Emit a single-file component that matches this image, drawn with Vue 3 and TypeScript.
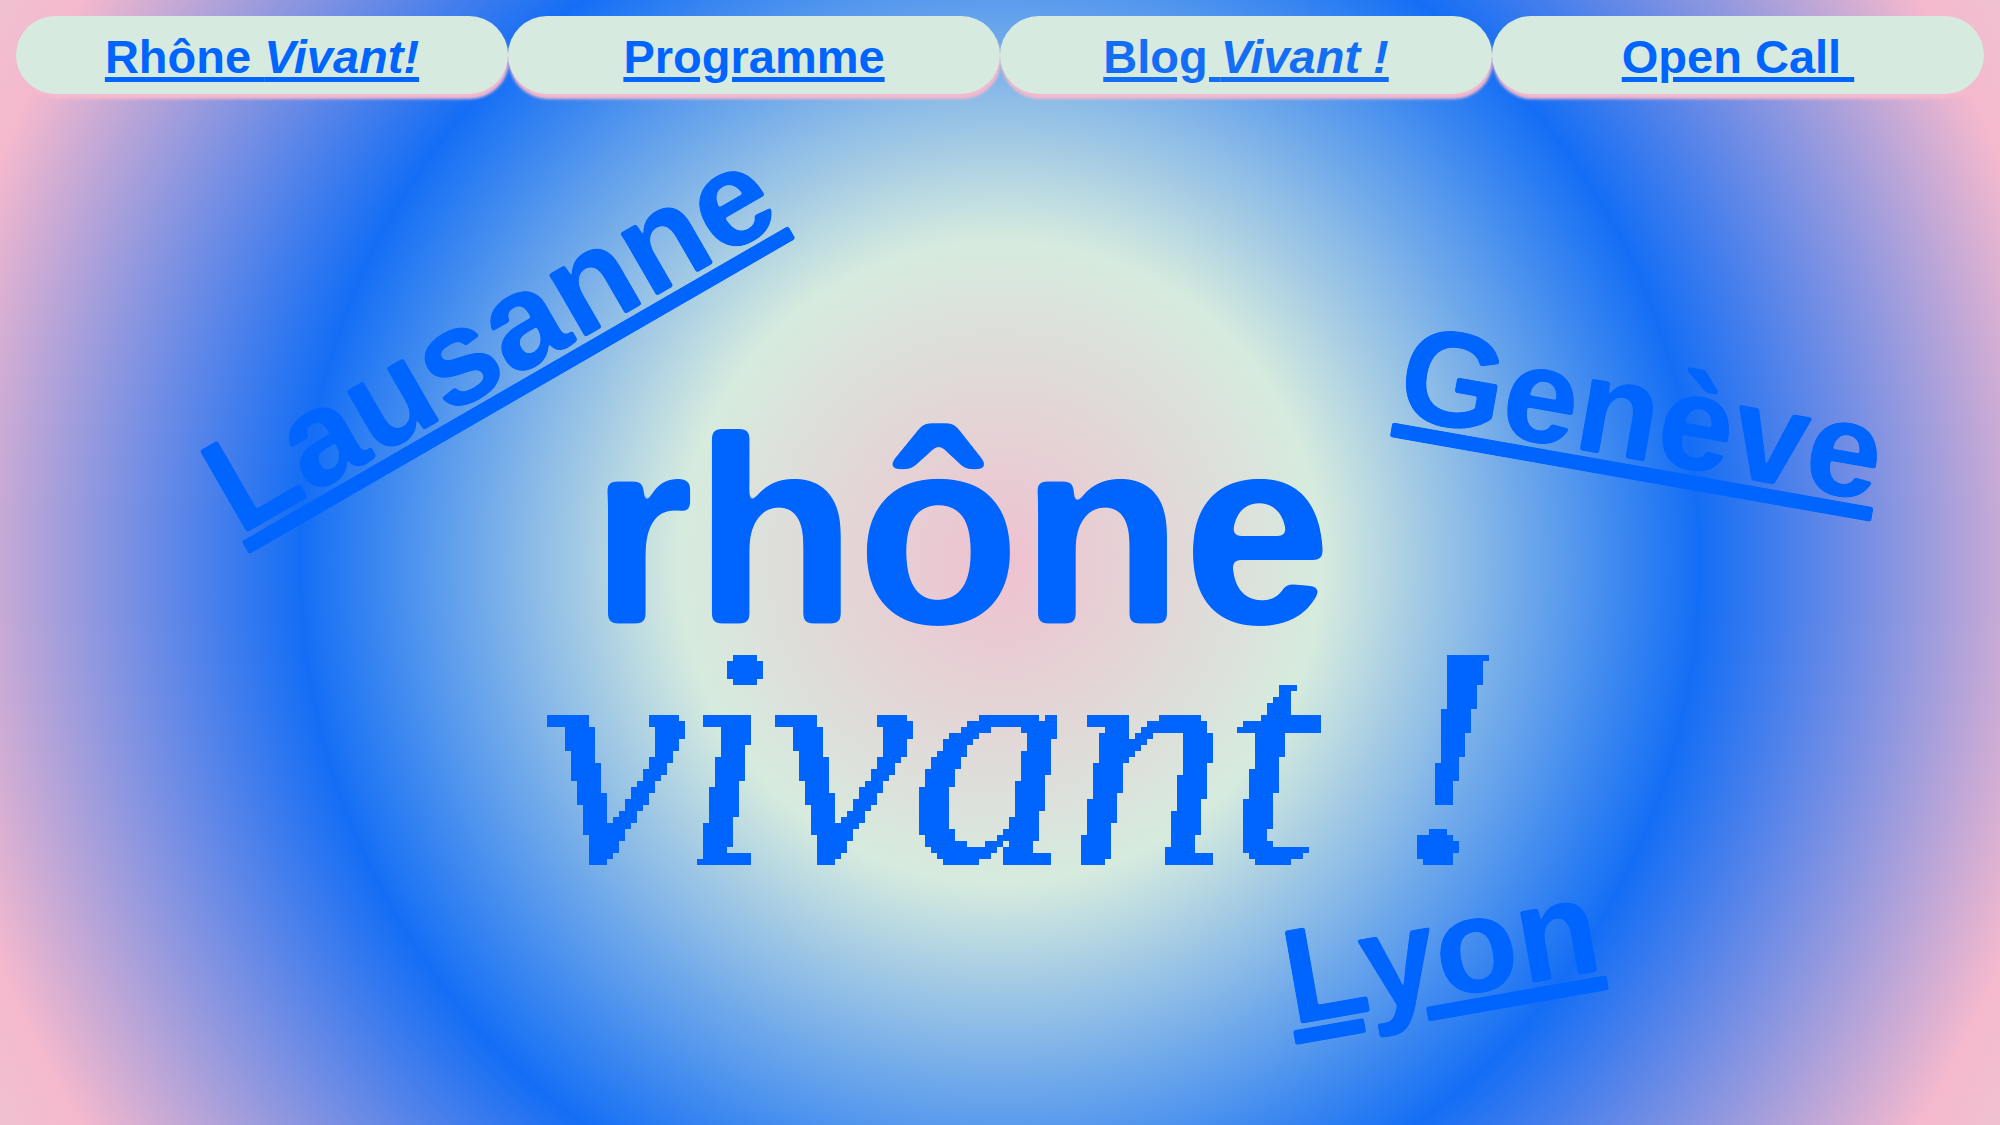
<script setup lang="ts">
interface NavItem {
  label: string
  accent?: string
  soft?: boolean
}

interface City {
  name: string
  slug: string
}

const navItems: NavItem[] = [
  { label: 'Rhône ', accent: 'Vivant!' },
  { label: 'Programme' },
  { label: 'Blog ', accent: 'Vivant !', soft: true },
  { label: 'Open Call\u00a0' },
]

const cities: City[] = [
  { name: 'Lausanne', slug: 'lausanne' },
  { name: 'Genève', slug: 'geneve' },
  { name: 'Lyon', slug: 'lyon' },
]
</script>

<template>
  <div class="page">
    <svg class="defs" aria-hidden="true">
      <!-- Rounds the corners of large lettering -->
      <filter id="soften" x="-5%" y="-5%" width="110%" height="110%" color-interpolation-filters="sRGB">
        <feGaussianBlur stdDeviation="4" />
        <feComponentTransfer>
          <feFuncA type="linear" slope="12" intercept="-5" />
        </feComponentTransfer>
      </filter>
      <filter id="soften-small" x="-5%" y="-5%" width="110%" height="110%" color-interpolation-filters="sRGB">
        <feGaussianBlur stdDeviation="1" />
        <feComponentTransfer>
          <feFuncA type="linear" slope="4" intercept="-1" />
        </feComponentTransfer>
      </filter>
      <!-- Samples the lettering on a 6px grid and fills each cell -->
      <filter
        id="pixelate"
        filterUnits="userSpaceOnUse"
        primitiveUnits="userSpaceOnUse"
        x="-60"
        y="-60"
        width="1200"
        height="480"
        color-interpolation-filters="sRGB"
      >
        <feOffset in="SourceGraphic" dx="3" dy="0" result="shifted" />
        <feMerge result="heavy">
          <feMergeNode in="SourceGraphic" />
          <feMergeNode in="shifted" />
        </feMerge>
        <feFlood x="2" y="2" width="1" height="1" flood-color="#000" result="dot" />
        <feComposite in="dot" in2="dot" operator="over" x="0" y="0" width="6" height="6" />
        <feTile result="grid" />
        <feComposite in="heavy" in2="grid" operator="in" />
        <feComponentTransfer result="samples">
          <feFuncA type="discrete" tableValues="0 1" />
        </feComponentTransfer>
        <feOffset in="samples" dx="1" dy="0" result="right" />
        <feMerge result="row">
          <feMergeNode in="samples" />
          <feMergeNode in="right" />
        </feMerge>
        <feOffset in="row" dx="0" dy="1" result="below" />
        <feMerge>
          <feMergeNode in="row" />
          <feMergeNode in="below" />
        </feMerge>
        <feMorphology operator="dilate" radius="2" />
      </filter>
    </svg>

    <nav class="nav">
      <a
        v-for="item in navItems"
        :key="item.label"
        href="#"
        class="pill"
        :class="{ soft: item.soft }"
      ><span>{{ item.label }}<em v-if="item.accent">{{ item.accent }}</em></span></a>
    </nav>

    <main class="hero">
      <h1 class="title">
        <span class="word">rhône</span>
        <span class="word pixel">vivant !</span>
      </h1>
      <a v-for="city in cities" :key="city.slug" href="#" class="city" :class="city.slug">{{ city.name }}</a>
    </main>
  </div>
</template>

<style>
body {
  margin: 0;
}
</style>

<style scoped>
.page {
  display: flex;
  flex-direction: column;
  position: relative;
  box-sizing: border-box;
  min-height: 100vh;
  overflow: hidden;
  color: #0064ff;
  font-family: "Liberation Sans", Arial, sans-serif;
  font-weight: 700;
  background: radial-gradient(
    circle farthest-corner at center,
    #efc1cf 0%,
    #d6ebde 28%,
    #146ef5 61%,
    #f5b9cd 94%,
    #efc1d0 100%
  );
}

.defs {
  position: absolute;
  width: 0;
  height: 0;
}

.nav {
  display: flex;
  padding: 16px;
}

.pill {
  flex: 1;
  display: flex;
  align-items: center;
  justify-content: center;
  box-sizing: border-box;
  height: 78px;
  padding-top: 2px;
  border-radius: 39px;
  background: #d7eadf;
  box-shadow: 1px 5px 3px #f5b9cd;
  color: inherit;
  font-size: 47px;
  white-space: pre;
  text-decoration: none;
}

.pill span {
  text-decoration: underline;
  text-decoration-thickness: 5px;
  text-underline-offset: 4px;
}

.pill.soft {
  color: #146ef5;
}

.hero {
  flex: 1;
  display: flex;
  justify-content: center;
}

.title {
  display: flex;
  flex-direction: column;
  margin: 309px 0 0 38px;
  font-size: 267px;
  font-weight: 700;
  line-height: 224px;
}

.word {
  margin-left: 49px;
  white-space: nowrap;
  filter: url(#soften);
}

.pixel {
  margin-left: 0;
  font-family: "Liberation Serif", "Times New Roman", serif;
  font-size: 316px;
  font-style: italic;
  font-weight: 400;
  filter: url(#pixelate);
}

.city {
  position: absolute;
  color: inherit;
  font-size: 135px;
  line-height: 154px;
  text-decoration: underline;
  text-decoration-thickness: 14px;
  text-underline-offset: 6px;
  filter: url(#soften-small);
}

.lausanne {
  left: calc(50% - 826px);
  top: 262px;
  transform: rotate(-30deg);
}

.geneve {
  left: calc(50% + 398px);
  top: 337px;
  transform: rotate(10deg);
}

.lyon {
  left: calc(50% + 282px);
  top: 875px;
  transform: rotate(-10deg);
}
</style>
